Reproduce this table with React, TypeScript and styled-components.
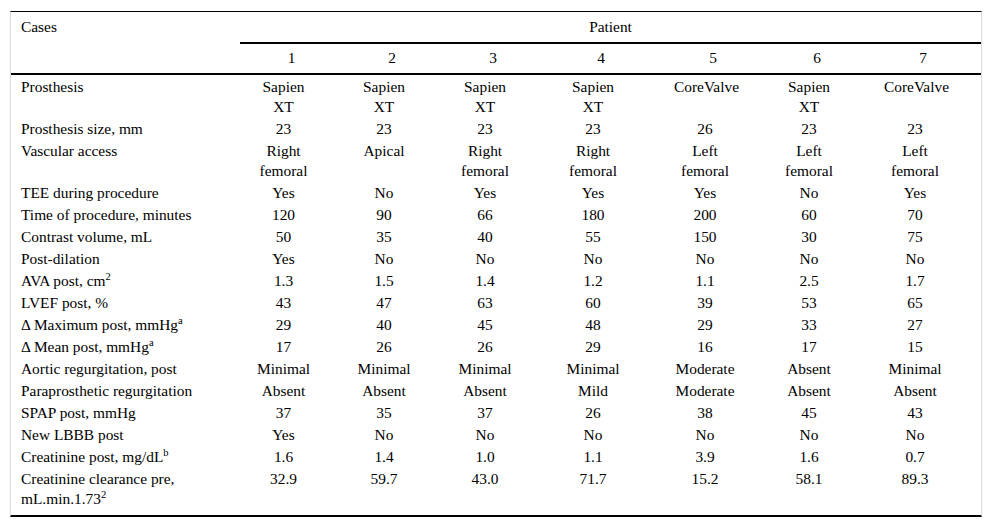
import React from "react";
import styled, { createGlobalStyle } from "styled-components";

const Global = createGlobalStyle`
  html, body { margin: 0; padding: 0; background: #fff; }
  body { font-family: "Liberation Serif", "Times New Roman", serif; color: #000; }
`;

const Page = styled.div`
  padding: 11px 0 0 10px;
  width: 972px;
`;

const Frame = styled.div`
  border-left: 1px solid #dcdcdc;
  border-right: 1px solid #dcdcdc;
  border-top: 1px solid #000;
  border-bottom: 2px solid #000;
  padding-bottom: 6px;
`;

const Grid = styled.div`
  display: grid;
  grid-template-columns: 229px 103px 98px 104px 112px 112px 96px 116px;
  font-size: 15.4px;
  line-height: 20px;
`;

const CasesCell = styled.div`
  grid-row: span 2;
  padding: 5px 0 0 10px;
  border-bottom: 2px solid #000;
`;

const PatientCell = styled.div`
  grid-column: span 7;
  text-align: center;
  padding: 5px 0;
  border-bottom: 2px solid #000;
`;

const NumCell = styled.div`
  text-align: center;
  padding: 4px 0 5px;
  border-bottom: 2px solid #000;
`;

const LabelCell = styled.div`
  padding: 2px 16px 0 10px;
`;

const ValueCell = styled.div`
  display: flex;
  justify-content: center;
  padding: 2px 16px 0 0;
`;

const Value = styled.span`
  display: inline-block;
  max-width: 62px;
  text-align: center;
`;

const Sup = styled.sup`
  font-size: 10.5px;
  line-height: 0;
  vertical-align: 6px;
`;

type Row = { label: React.ReactNode; values: string[] };

const rows: Row[] = [
  { label: "Prosthesis", values: ["Sapien XT", "Sapien XT", "Sapien XT", "Sapien XT", "CoreValve", "Sapien XT", "CoreValve"] },
  { label: "Prosthesis size, mm", values: ["23", "23", "23", "23", "26", "23", "23"] },
  { label: "Vascular access", values: ["Right femoral", "Apical", "Right femoral", "Right femoral", "Left femoral", "Left femoral", "Left femoral"] },
  { label: "TEE during procedure", values: ["Yes", "No", "Yes", "Yes", "Yes", "No", "Yes"] },
  { label: "Time of procedure, minutes", values: ["120", "90", "66", "180", "200", "60", "70"] },
  { label: "Contrast volume, mL", values: ["50", "35", "40", "55", "150", "30", "75"] },
  { label: "Post-dilation", values: ["Yes", "No", "No", "No", "No", "No", "No"] },
  { label: <>AVA post, cm<Sup>2</Sup></>, values: ["1.3", "1.5", "1.4", "1.2", "1.1", "2.5", "1.7"] },
  { label: "LVEF post, %", values: ["43", "47", "63", "60", "39", "53", "65"] },
  { label: <>Δ Maximum post, mmHg<Sup>a</Sup></>, values: ["29", "40", "45", "48", "29", "33", "27"] },
  { label: <>Δ Mean post, mmHg<Sup>a</Sup></>, values: ["17", "26", "26", "29", "16", "17", "15"] },
  { label: "Aortic regurgitation, post", values: ["Minimal", "Minimal", "Minimal", "Minimal", "Moderate", "Absent", "Minimal"] },
  { label: "Paraprosthetic regurgitation", values: ["Absent", "Absent", "Absent", "Mild", "Moderate", "Absent", "Absent"] },
  { label: "SPAP post, mmHg", values: ["37", "35", "37", "26", "38", "45", "43"] },
  { label: "New LBBB post", values: ["Yes", "No", "No", "No", "No", "No", "No"] },
  { label: <>Creatinine post, mg/dL<Sup>b</Sup></>, values: ["1.6", "1.4", "1.0", "1.1", "3.9", "1.6", "0.7"] },
  { label: <>Creatinine clearance pre, mL.min.1.73<Sup>2</Sup></>, values: ["32.9", "59.7", "43.0", "71.7", "15.2", "58.1", "89.3"] },
];

export default function App() {
  return (
    <>
      <Global />
      <Page>
        <Frame>
          <Grid>
            <CasesCell>Cases</CasesCell>
            <PatientCell>Patient</PatientCell>
            {[1, 2, 3, 4, 5, 6, 7].map((n) => (
              <NumCell key={n}>{n}</NumCell>
            ))}
            {rows.map((r, i) => (
              <React.Fragment key={i}>
                <LabelCell>{r.label}</LabelCell>
                {r.values.map((v, j) => (
                  <ValueCell key={j}>
                    <Value>{v}</Value>
                  </ValueCell>
                ))}
              </React.Fragment>
            ))}
          </Grid>
        </Frame>
      </Page>
    </>
  );
}
